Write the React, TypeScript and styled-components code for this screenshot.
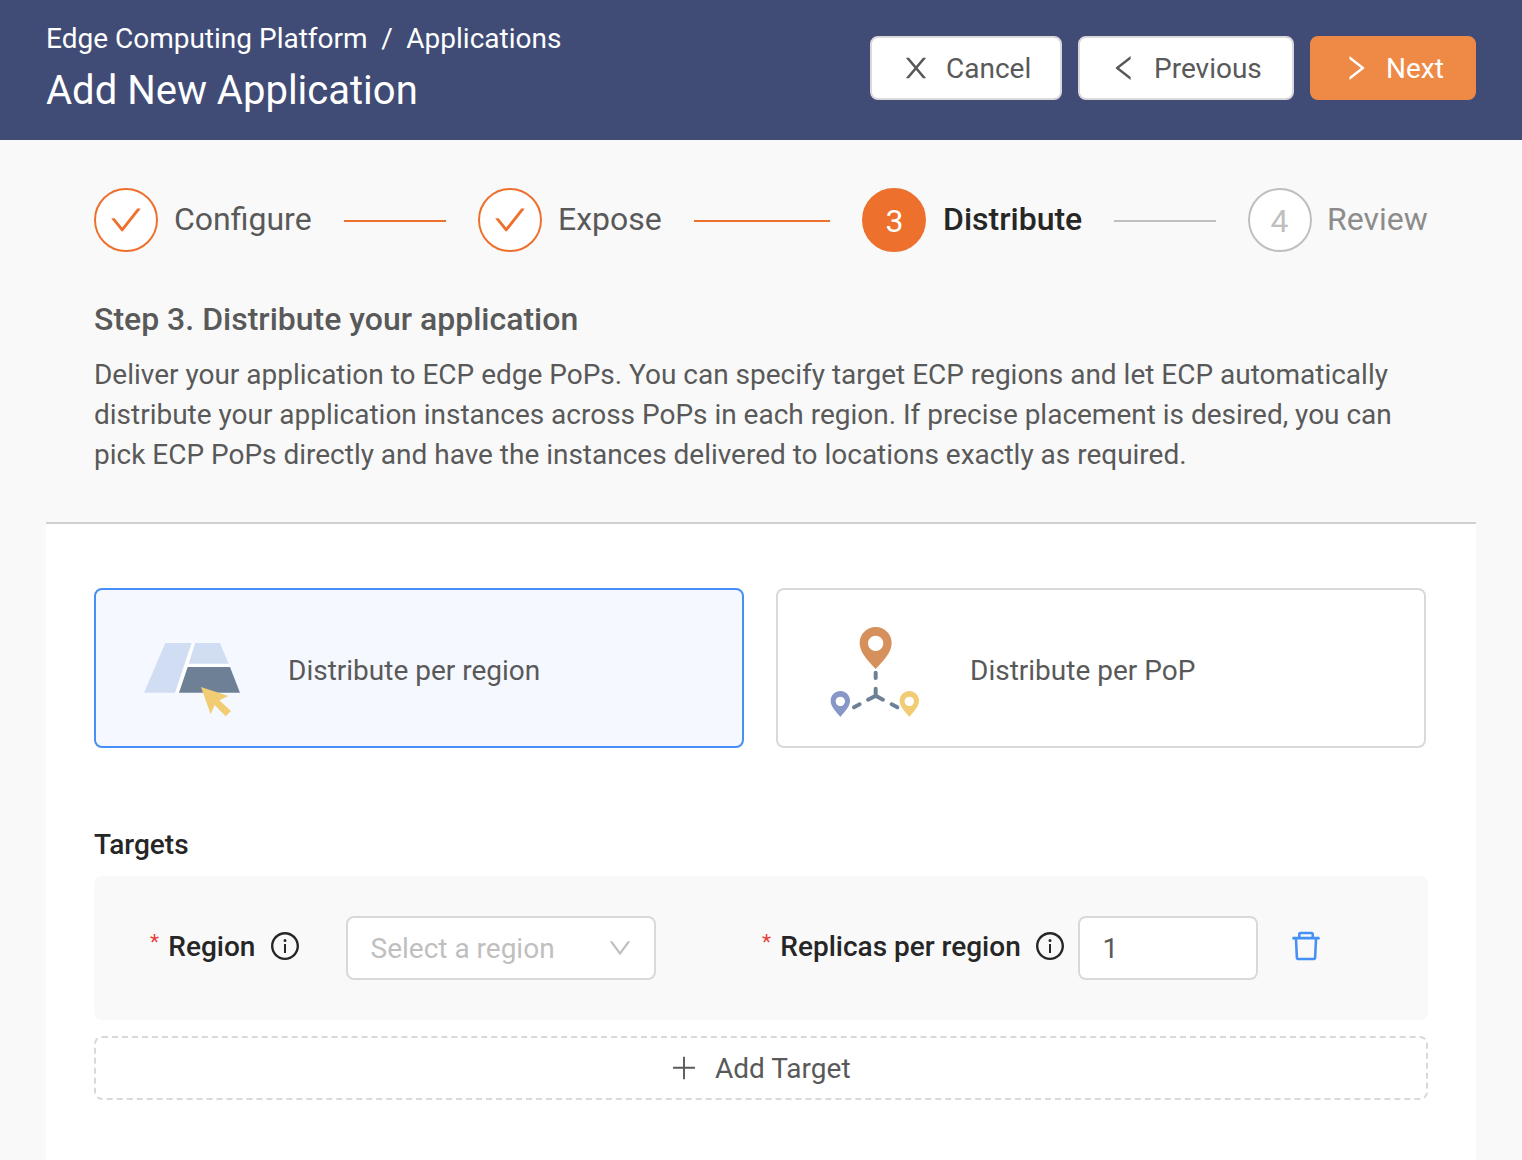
import React from "react";
import styled, { createGlobalStyle } from "styled-components";

const GlobalStyle = createGlobalStyle`
  * { box-sizing: border-box; }
  body {
    margin: 0;
    background: #f9f9f9;
    font-family: Roboto, "Liberation Sans", sans-serif;
    font-size: 28px;
    color: #595959;
    overflow: hidden;
  }
`;

const PATHS = {
  close:
    "M563.8 512l262.5-312.9c4.4-5.2.7-13.1-6.1-13.1h-79.8c-4.7 0-9.2 2.1-12.3 5.7L511.6 449.8 295.1 191.7c-3-3.6-7.5-5.7-12.3-5.7H203c-6.8 0-10.5 7.9-6.1 13.1L459.4 512 196.9 824.9A7.95 7.95 0 00203 838h79.8c4.7 0 9.2-2.1 12.3-5.7l216.5-258.1 216.5 258.1c3 3.6 7.5 5.7 12.3 5.7h79.8c6.8 0 10.5-7.9 6.1-13.1L563.8 512z",
  left: "M724 218.3V141c0-6.7-7.7-10.4-12.9-6.3L260.3 486.8a31.86 31.86 0 000 50.3l450.8 352.1c5.3 4.1 12.9.4 12.9-6.3v-77.3c0-4.9-2.3-9.6-6.1-12.6l-360-281 360-281.1c3.8-3 6.1-7.7 6.1-12.6z",
  right:
    "M765.7 486.8L314.9 134.7A7.97 7.97 0 00302 141v77.3c0 4.9 2.3 9.6 6.1 12.6l360 281.1-360 281.1c-3.9 3-6.1 7.7-6.1 12.6V883c0 6.7 7.7 10.4 12.9 6.3l450.8-352.1a31.96 31.96 0 000-50.4z",
  check:
    "M912 190h-69.9c-9.8 0-19.1 4.5-25.1 12.2L404.7 724.5 207 474a32 32 0 00-25.1-12.2H112c-6.7 0-10.4 7.7-6.3 12.9l273.9 347c12.8 16.2 37.4 16.2 50.3 0l488.4-618.9c4.1-5.1.4-12.8-6.3-12.8z",
  down: "M884 256h-75c-5.1 0-9.9 2.5-12.9 6.6L512 654.2 227.9 262.6c-3-4.1-7.8-6.6-12.9-6.6h-75c-6.5 0-10.3 7.4-6.5 12.7l352.6 486.1c12.8 17.6 39 17.6 51.7 0l352.6-486.1c3.9-5.3.1-12.7-6.4-12.7z",
  info: "M512 64C264.6 64 64 264.6 64 512s200.6 448 448 448 448-200.6 448-448S759.4 64 512 64zm0 820c-205.4 0-372-166.6-372-372s166.6-372 372-372 372 166.6 372 372-166.6 372-372 372zM464 336a48 48 0 1096 0 48 48 0 10-96 0zm72 112h-48c-4.4 0-8 3.6-8 8v272c0 4.4 3.6 8 8 8h48c4.4 0 8-3.6 8-8V456c0-4.4-3.6-8-8-8z",
  trash:
    "M360 184h-8c4.4 0 8-3.6 8-8v8h304v-8c0 4.4 3.6 8 8 8h-8v72h72v-80c0-35.3-28.7-64-64-64H352c-35.3 0-64 28.7-64 64v80h72v-72zm504 72H160c-17.7 0-32 14.3-32 32v32c0 4.4 3.6 8 8 8h60.4l24.7 523c1.6 34.1 29.8 61 63.9 61h454c34.2 0 62.3-26.8 63.9-61l24.7-523H888c4.4 0 8-3.6 8-8v-32c0-17.7-14.3-32-32-32zM731.3 840H292.7l-24.2-512h487l-24.2 512z",
  plus: "M490 152h44q8 0 8 8v704q0 8-8 8h-44q-8 0-8-8V160q0-8 8-8zM168 474h688q8 0 8 8v44q0 8-8 8H168q-8 0-8-8v-44q0-8 8-8z",
};

const Glyph = styled.svg<{ $size: number }>`
  display: block;
  flex: none;
  width: ${(p) => p.$size}px;
  height: ${(p) => p.$size}px;
  fill: currentColor;
`;

const Icon = ({ name, size = 28 }: { name: keyof typeof PATHS; size?: number }) => (
  <Glyph $size={size} viewBox="64 64 896 896" aria-hidden="true">
    <path d={PATHS[name]} />
  </Glyph>
);

const Header = styled.header`
  display: flex;
  justify-content: space-between;
  height: 140px;
  padding: 16px 46px 0;
  background: #404c75;
  color: #fff;
`;

const Breadcrumb = styled.nav`
  display: flex;
  gap: 13.6px;
  padding-top: 1px;
  line-height: 44px;
`;

const PageTitle = styled.h1`
  margin: 4px 0 0;
  font-size: 40px;
  font-weight: 400;
  line-height: 52px;
`;

const Actions = styled.div`
  display: flex;
  gap: 16px;
  padding-top: 20px;
`;

const Button = styled.button<{ $primary?: boolean; $width: number }>`
  display: flex;
  align-items: center;
  gap: 16px;
  width: ${(p) => p.$width}px;
  height: 64px;
  padding: 0 0 0 30px;
  border: 2px solid ${(p) => (p.$primary ? "#ee8a46" : "#d9d9d9")};
  border-radius: 8px;
  background: ${(p) => (p.$primary ? "#ee8a46" : "#fff")};
  color: ${(p) => (p.$primary ? "#fff" : "#595959")};
  font: inherit;
  white-space: nowrap;
`;

const Steps = styled.ol`
  display: flex;
  width: 1334px;
  margin: 48px 0 0 94px;
  padding: 0;
  list-style: none;
`;

type Status = "done" | "active" | "wait";

const StepItem = styled.li<{ $status: Status }>`
  display: flex;
  align-items: center;
  flex: ${(p) => ({ done: "0 0 384px", active: "1 1 0", wait: "0 0 180px" })[p.$status]};
  min-width: 0;
  padding-right: ${(p) => (p.$status === "wait" ? 0 : 32)}px;
`;

const StepCircle = styled.span<{ $status: Status }>`
  display: flex;
  flex: none;
  align-items: center;
  justify-content: center;
  width: 64px;
  height: 64px;
  padding: ${(p) => ({ done: "0", active: "2px 0 0 1px", wait: "2px 1px 0 0" })[p.$status]};
  border: 2px solid ${(p) => (p.$status === "wait" ? "#bfbfbf" : "#ed702d")};
  border-radius: 50%;
  background: ${(p) => (p.$status === "active" ? "#ed702d" : "#fff")};
  color: ${(p) => ({ done: "#ed702d", active: "#fff", wait: "#bfbfbf" })[p.$status]};
  font-size: 32px;
`;

const StepTitle = styled.span<{ $status: Status }>`
  margin-left: ${(p) => ({ done: 16, active: 17, wait: 15 })[p.$status]}px;
  color: ${(p) => ({ done: "#595959", active: "#262626", wait: "#8c8c8c" })[p.$status]};
  font-size: 32px;
  font-weight: ${(p) => (p.$status === "active" ? 500 : 400)};
  line-height: 62px;
  padding-bottom: 2px;
  white-space: nowrap;
`;

const StepLine = styled.span<{ $done: boolean }>`
  flex: 1;
  height: 2px;
  margin: 2px 0 0 32px;
  background: ${(p) => (p.$done ? "#ed702d" : "#bfbfbf")};
`;

const Intro = styled.section`
  margin: 43px 94px 0;
`;

const IntroTitle = styled.h2`
  margin: 0;
  font-size: 32px;
  font-weight: 500;
  line-height: 48px;
`;

const IntroText = styled.p`
  margin: 12px 0 0;
  line-height: 40px;
  letter-spacing: -0.01px;
  white-space: nowrap;
`;

const Panel = styled.main`
  height: 640px;
  margin: 47px 46px 0;
  padding: 64px 48px 0;
  border-top: 2px solid #d0d0d0;
  background: #fff;
`;

const Choices = styled.div`
  display: flex;
  gap: 32px;
`;

const Choice = styled.div<{ $selected?: boolean }>`
  display: flex;
  align-items: center;
  gap: 48px;
  width: 650px;
  height: 160px;
  padding: 0 48px;
  border: 2px solid ${(p) => (p.$selected ? "#4690f5" : "#d9d9d9")};
  border-radius: 8px;
  background: ${(p) => (p.$selected ? "#f5f8ff" : "#fff")};
`;

const ChoiceLabel = styled.span`
  padding-top: 5px;
`;

const Art = styled.svg`
  display: block;
  flex: none;
  width: 96px;
  height: 96px;
  overflow: visible;
`;

const SectionTitle = styled.h3`
  margin: 75px 0 0;
  color: #262626;
  font-size: 28px;
  font-weight: 500;
  line-height: 44px;
`;

const TargetRow = styled.div`
  display: flex;
  align-items: flex-start;
  height: 144px;
  margin-top: 9px;
  padding: 40px 0 0 56px;
  border-radius: 8px;
  background: #f9f9f9;
`;

const FieldLabel = styled.label<{ $width: number }>`
  display: flex;
  align-items: center;
  width: ${(p) => p.$width}px;
  height: 60px;
  color: #262626;
  font-weight: 500;
  white-space: nowrap;

  svg {
    margin-left: 15.5px;
  }
`;

const Required = styled.span`
  width: 18.3px;
  padding-bottom: 8px;
  color: #e8403c;
  font-size: 21px;
  font-weight: 400;
`;

const Field = styled.div<{ $width: number; $placeholder?: boolean }>`
  display: flex;
  align-items: center;
  justify-content: space-between;
  width: ${(p) => p.$width}px;
  height: 64px;
  padding: 0 22px 0 22.5px;
  border: 2px solid #d9d9d9;
  border-radius: 8px;
  background: #fff;
  color: ${(p) => (p.$placeholder ? "#bfbfbf" : "#595959")};
`;

const FieldGap = styled.span`
  width: 106px;
`;

const DeleteButton = styled.button`
  margin: 14px 0 0 32px;
  padding: 0;
  border: 0;
  background: none;
  color: #4690f5;
`;

const AddButton = styled.button`
  display: flex;
  align-items: center;
  justify-content: center;
  gap: 16.5px;
  width: 1334px;
  height: 64px;
  margin-top: 16px;
  padding: 0 1px 0 0;
  border: 2px dashed #d9d9d9;
  border-radius: 8px;
  background: #fff;
  color: #595959;
  font: inherit;
`;

const RegionArt = () => (
  <Art viewBox="42 0 288 288" aria-hidden="true">
    <path d="M106 69H270L330 218H42Z" fill="#fff" />
    <path d="M106 69H185L135 218H42Z" fill="#d1ddf3" />
    <path d="M195 69H270L296 131H176Z" fill="#d1ddf3" />
    <path d="M173 141H300L330 218H147Z" fill="#6d8096" />
    <path d="M213 201L295 228L268 241L303 273L287 289L254 255L242 283Z" fill="#f2cc73" />
  </Art>
);

const PopArt = () => (
  <Art viewBox="48 30 288 288" aria-hidden="true">
    <path
      fill="#d5905b"
      fillRule="evenodd"
      d="M197 51C170 51 149 72 149 99C149 130 177 155 197 177C217 155 245 130 245 99C245 72 224 51 197 51ZM197 77A23 23 0 1 1 196.9 77Z"
    />
    <path
      fill="#8697c8"
      fillRule="evenodd"
      d="M91 243C75 243 62 256 62 272C62 291 79 305 91 321C103 305 120 291 120 272C120 256 107 243 91 243ZM91 260A14 14 0 1 1 90.9 260Z"
    />
    <path
      fill="#f2cc73"
      fillRule="evenodd"
      d="M298 243C282 243 269 256 269 272C269 291 286 305 298 321C310 305 327 291 327 272C327 256 314 243 298 243ZM298 260A14 14 0 1 1 297.9 260Z"
    />
    <path
      d="M197 188V204M197 236V257M197 257L174 269M197 257L219 269M132 292L149 283M245 283L262 292"
      fill="none"
      stroke="#6d8096"
      strokeWidth="12"
      strokeLinecap="round"
      strokeLinejoin="round"
    />
  </Art>
);

const steps: { title: string; status: Status }[] = [
  { title: "Configure", status: "done" },
  { title: "Expose", status: "done" },
  { title: "Distribute", status: "active" },
  { title: "Review", status: "wait" },
];

export default function App() {
  return (
    <>
      <GlobalStyle />
      <Header>
        <div>
          <Breadcrumb>
            <span>Edge Computing Platform</span>
            <span>/</span>
            <span>Applications</span>
          </Breadcrumb>
          <PageTitle>Add New Application</PageTitle>
        </div>
        <Actions>
          <Button $width={192}>
            <Icon name="close" />
            Cancel
          </Button>
          <Button $width={216}>
            <Icon name="left" />
            Previous
          </Button>
          <Button $width={166} $primary>
            <Icon name="right" />
            Next
          </Button>
        </Actions>
      </Header>

      <Steps>
        {steps.map(({ title, status }, i) => (
          <StepItem key={title} $status={status}>
            <StepCircle $status={status}>
              {status === "done" ? <Icon name="check" size={32} /> : i + 1}
            </StepCircle>
            <StepTitle $status={status}>{title}</StepTitle>
            {i < steps.length - 1 && <StepLine $done={status === "done"} />}
          </StepItem>
        ))}
      </Steps>

      <Intro>
        <IntroTitle>Step 3. Distribute your application</IntroTitle>
        <IntroText>
          Deliver your application to ECP edge PoPs. You can specify target ECP regions and let ECP automatically
          <br />
          distribute your application instances across PoPs in each region. If precise placement is desired, you can
          <br />
          pick ECP PoPs directly and have the instances delivered to locations exactly as required.
        </IntroText>
      </Intro>

      <Panel>
        <Choices>
          <Choice $selected>
            <RegionArt />
            <ChoiceLabel>Distribute per region</ChoiceLabel>
          </Choice>
          <Choice>
            <PopArt />
            <ChoiceLabel>Distribute per PoP</ChoiceLabel>
          </Choice>
        </Choices>

        <SectionTitle>Targets</SectionTitle>
        <TargetRow>
          <FieldLabel $width={196}>
            <Required>*</Required>
            Region
            <Icon name="info" />
          </FieldLabel>
          <Field $width={310} $placeholder>
            Select a region
            <Icon name="down" size={24} />
          </Field>
          <FieldGap />
          <FieldLabel $width={316}>
            <Required>*</Required>
            Replicas per region
            <Icon name="info" />
          </FieldLabel>
          <Field $width={180}>1</Field>
          <DeleteButton aria-label="Delete target">
            <Icon name="trash" size={32} />
          </DeleteButton>
        </TargetRow>
        <AddButton>
          <Icon name="plus" />
          Add Target
        </AddButton>
      </Panel>
    </>
  );
}
